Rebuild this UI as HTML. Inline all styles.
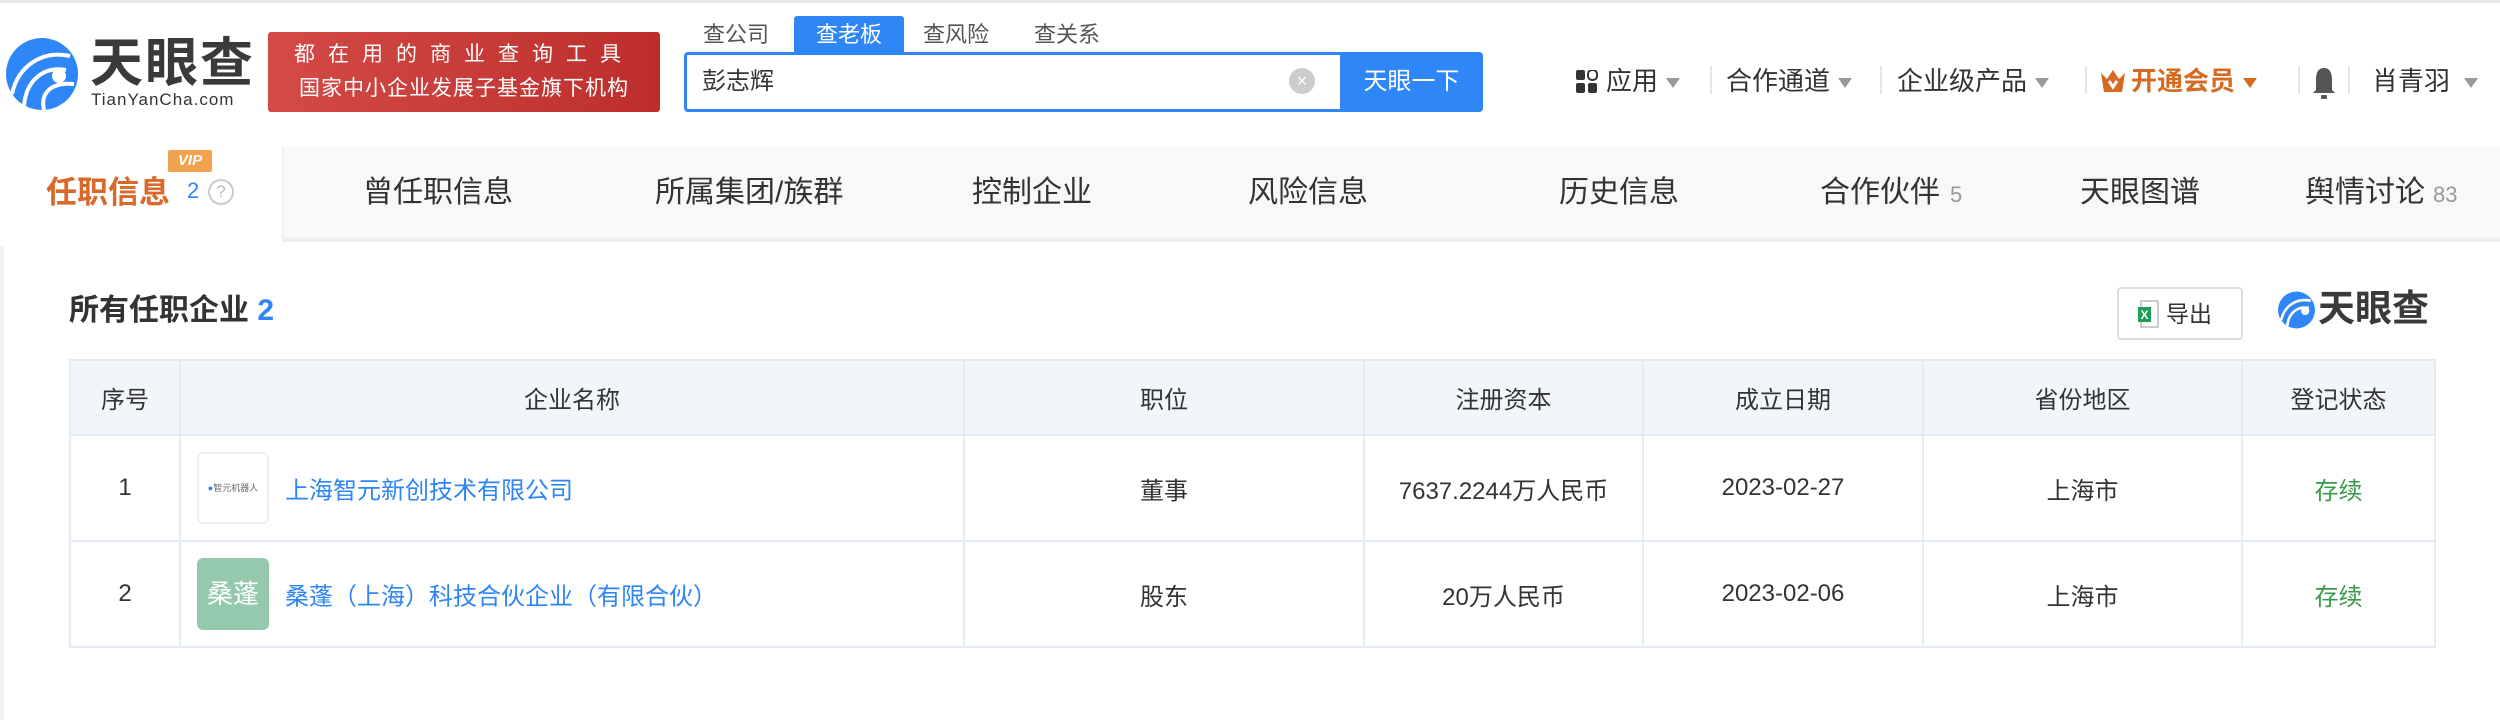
<!DOCTYPE html>
<html><head><meta charset="utf-8"><style>
*{margin:0;padding:0;box-sizing:border-box}
body{width:2500px;height:720px;background:#fff;font-family:"Liberation Sans","Noto Sans CJK SC",sans-serif;color:#333;position:relative;overflow:hidden}
.a{position:absolute;white-space:nowrap}
.hdr{left:0;top:0;width:2500px;height:147px;background:#fff;border-top:3px solid #e6e6e6;box-shadow:0 2px 6px rgba(0,0,0,.06)}
.nav{left:0;top:147px;width:2500px;height:95px;background:#f8f8f8;border-bottom:4px solid #efefef}
.nt{top:170px;font-size:30px;color:#333;line-height:46px}
.mi{top:62px;font-size:26px;color:#333;line-height:38px}
.tri{display:inline-block;width:0;height:0;border-left:7px solid transparent;border-right:7px solid transparent;border-top:10px solid #999;vertical-align:middle;margin-left:8px}
.sep{top:66px;width:2px;height:28px;background:#e6e6e6}
table{position:absolute;left:69px;top:359px;width:2367px;border-collapse:collapse;font-size:24px}
td,th{border:2px solid #e5ebf2;text-align:center;font-weight:normal;color:#333}
th{background:#f2f6fb;height:75px}
td{height:106px}
.lk{color:#2e85f5}
</style></head><body>
<div class="a hdr"></div>
<svg class="a" style="left:4px;top:36px" width="78" height="76" viewBox="0 0 78 76">
<circle cx="38" cy="38" r="36" fill="#2f86f6"/>
<path d="M8 58 C14 30 38 14 66 20" stroke="#fff" stroke-width="4" fill="none"/>
<path d="M20 70 C22 44 40 30 62 34" stroke="#fff" stroke-width="4" fill="none"/>
<path d="M40 74 C36 56 48 46 70 48" stroke="#fff" stroke-width="4" fill="none"/>
<circle cx="55" cy="40" r="7" fill="#fff"/>
</svg>
<div class="a" style="left:90px;top:34px;font-size:53px;font-weight:bold;color:#3a3a3a;line-height:60px;letter-spacing:2px">天眼查</div>
<div class="a" style="left:91px;top:90px;font-size:17px;color:#333;letter-spacing:1px">TianYanCha.com</div>
<div class="a" style="left:268px;top:32px;width:392px;height:80px;background:linear-gradient(90deg,#d34a47,#bd2e2b);border-radius:3px;color:#fff;font-size:21px;text-align:center;line-height:34px;padding-top:6px">
<div style="letter-spacing:13px">都在用的商业查询工具</div><div style="letter-spacing:1px">国家中小企业发展子基金旗下机构</div></div>
<div class="a" style="left:703px;top:18px;font-size:22px;color:#555;line-height:34px">查公司</div>
<div class="a" style="left:794px;top:16px;width:110px;height:38px;background:#2f86f6;border-radius:3px 3px 0 0;color:#fff;font-size:22px;line-height:38px;text-align:center">查老板</div>
<div class="a" style="left:923px;top:18px;font-size:22px;color:#555;line-height:34px">查风险</div>
<div class="a" style="left:1034px;top:18px;font-size:22px;color:#555;line-height:34px">查关系</div>
<div class="a" style="left:684px;top:52px;width:799px;height:60px;border:3px solid #2f86f6;border-radius:4px;background:#fff"></div>
<div class="a" style="left:702px;top:64px;font-size:24px;color:#333;line-height:36px">彭志辉</div>
<div class="a" style="left:1289px;top:68px;width:26px;height:26px;border-radius:50%;background:#ccc;color:#fff;font-size:18px;line-height:26px;text-align:center">×</div>
<div class="a" style="left:1340px;top:52px;width:143px;height:60px;background:#2f86f6;border-radius:0 4px 4px 0;color:#fff;font-size:24px;line-height:60px;text-align:center">天眼一下</div>
<svg class="a" style="left:1576px;top:70px" width="22" height="24"><rect x="0" y="0" width="9" height="10" rx="2" fill="#333"/><rect x="12" y="0" width="9" height="10" rx="4" fill="none" stroke="#333" stroke-width="2"/><rect x="0" y="13" width="9" height="10" rx="2" fill="#333"/><rect x="12" y="13" width="9" height="10" rx="2" fill="#333"/></svg>
<div class="a mi" style="left:1606px">应用<span class="tri"></span></div>
<div class="a sep" style="left:1710px"></div>
<div class="a mi" style="left:1726px">合作通道<span class="tri"></span></div>
<div class="a sep" style="left:1880px"></div>
<div class="a mi" style="left:1897px">企业级产品<span class="tri"></span></div>
<div class="a sep" style="left:2085px"></div>
<svg class="a" style="left:2100px;top:68px" width="26" height="26"><path d="M1 5 L7 11 L13 2 L19 11 L25 5 L22 24 L4 24 Z" fill="#d66a23"/><path d="M9 13 L13 19 L17 13" stroke="#fff" stroke-width="3" fill="none"/></svg>
<div class="a mi" style="left:2131px;color:#d66a23;font-weight:bold">开通会员<span class="tri" style="border-top-color:#d66a23"></span></div>
<div class="a sep" style="left:2298px"></div>
<svg class="a" style="left:2312px;top:66px" width="24" height="34"><path d="M12 2 C5 2 4 9 4 14 L4 24 L1 27 L23 27 L20 24 L20 14 C20 9 19 2 12 2 Z" fill="#555"/><rect x="9" y="29" width="6" height="4" rx="1" fill="#555"/></svg>
<div class="a sep" style="left:2348px"></div>
<div class="a mi" style="left:2372px">肖青羽<span class="tri" style="margin-left:14px"></span></div>
<div class="a nav"></div>
<div class="a" style="left:0;top:147px;width:284px;height:95px;background:#fff;border-right:2px solid #f0f0f0"></div>
<div class="a" style="left:168px;top:150px;width:44px;height:22px;background:#f2a24e;color:#fff;font-size:15px;font-style:italic;font-weight:bold;line-height:22px;text-align:center;border-radius:2px">VIP</div>
<div class="a nt" style="left:46px;color:#d9692a;font-weight:bold;font-size:31px">任职信息</div>
<div class="a" style="left:187px;top:178px;font-size:22px;color:#2e85f5">2</div>
<div class="a" style="left:208px;top:179px;width:26px;height:26px;border:2px solid #ccc;border-radius:50%;color:#bbb;font-size:17px;line-height:22px;text-align:center">?</div>
<div class="a nt" style="left:363px">曾任职信息</div>
<div class="a nt" style="left:655px">所属集团/族群</div>
<div class="a nt" style="left:972px">控制企业</div>
<div class="a nt" style="left:1248px">风险信息</div>
<div class="a nt" style="left:1559px">历史信息</div>
<div class="a nt" style="left:1820px">合作伙伴<span style="font-size:22px;color:#999;margin-left:10px">5</span></div>
<div class="a nt" style="left:2080px">天眼图谱</div>
<div class="a nt" style="left:2305px">舆情讨论<span style="font-size:22px;color:#999;margin-left:8px">83</span></div>
<div class="a" style="left:0;top:246px;width:4px;height:474px;background:#f2f2f2"></div>
<div class="a" style="left:69px;top:290px;font-size:30px;font-weight:bold;color:#333;line-height:42px">所有任职企业 <span style="color:#2e85f5">2</span></div>
<div class="a" style="left:2117px;top:287px;width:126px;height:53px;border:2px solid #ddd;border-radius:4px;background:#fff"></div>
<svg class="a" style="left:2138px;top:300px" width="22" height="28"><rect x="3" y="1" width="17" height="26" fill="#fff" stroke="#bbb" stroke-width="1.5"/><rect x="0" y="7" width="13" height="15" fill="#1f9d55"/><text x="2.5" y="19" font-size="12" fill="#fff" font-family="Liberation Sans" font-weight="bold">X</text></svg>
<div class="a" style="left:2166px;top:298px;font-size:23px;color:#333;line-height:32px">导出</div>
<svg class="a" style="left:2277px;top:290px" width="40" height="40" viewBox="0 0 78 76"><circle cx="38" cy="38" r="36" fill="#2f86f6"/><path d="M8 58 C14 30 38 14 66 20" stroke="#fff" stroke-width="5" fill="none"/><path d="M20 70 C22 44 40 30 62 34" stroke="#fff" stroke-width="5" fill="none"/><circle cx="55" cy="40" r="8" fill="#fff"/></svg>
<div class="a" style="left:2318px;top:286px;font-size:37px;font-weight:bold;color:#3a3a3a;line-height:46px">天眼查</div>
<table>
<tr><th style="width:110px;text-align:left;padding-left:30px">序号</th><th style="width:784px">企业名称</th><th style="width:400px">职位</th><th style="width:279px">注册资本</th><th style="width:280px">成立日期</th><th style="width:319px">省份地区</th><th>登记状态</th></tr>
<tr><td>1</td><td style="text-align:left;padding-left:16px"><span style="display:inline-block;width:72px;height:72px;border:2px solid #eee;border-radius:6px;vertical-align:middle;font-size:9px;color:#666;line-height:68px;text-align:center;margin-right:16px"><b style="color:#2e85f5">●</b>智元机器人</span><span class="lk" style="vertical-align:middle">上海智元新创技术有限公司</span></td><td>董事</td><td>7637.2244万人民币</td><td>2023-02-27</td><td>上海市</td><td style="color:#3a9a4c">存续</td></tr>
<tr><td>2</td><td style="text-align:left;padding-left:16px"><span style="display:inline-block;width:72px;height:72px;background:#94c9ad;border-radius:6px;vertical-align:middle;font-size:26px;color:#fff;line-height:72px;text-align:center;margin-right:16px">桑蓬</span><span class="lk" style="vertical-align:middle">桑蓬（上海）科技合伙企业（有限合伙）</span></td><td>股东</td><td>20万人民币</td><td>2023-02-06</td><td>上海市</td><td style="color:#3a9a4c">存续</td></tr>
</table>
</body></html>
